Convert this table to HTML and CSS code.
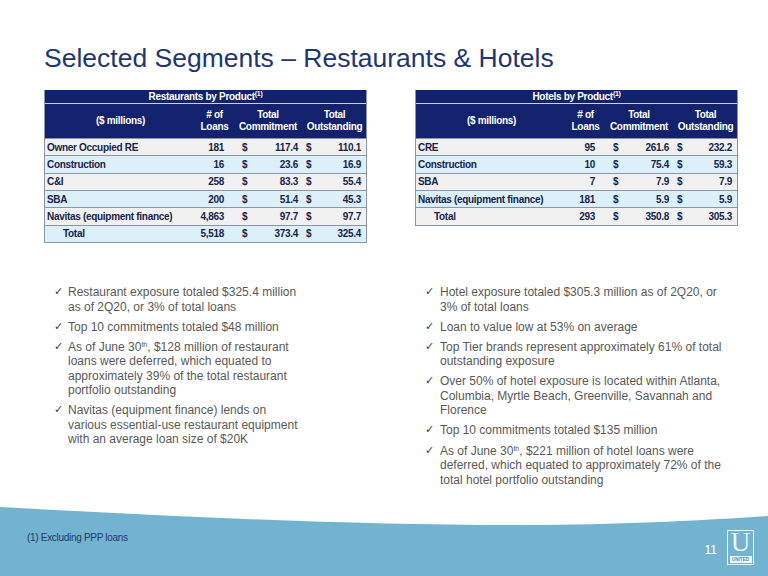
FILE: index.html
```html
<!DOCTYPE html>
<html>
<head>
<meta charset="utf-8">
<link rel="stylesheet" href="styles.css">
</head>
<body>
<div class="slide">
  <h1 class="title">Selected Segments – Restaurants &amp; Hotels</h1>

  <div class="tables">
    <div class="tbl">
      <div class="tbl-title">Restaurants by Product<sup>(1)</sup></div>
      <div class="row head">
        <div class="c lbl">($ millions)</div>
        <div class="c">#&nbsp;of<br>Loans</div>
        <div class="c">Total<br>Commitment</div>
        <div class="c">Total<br>Outstanding</div>
      </div>
      <div class="row grey"><div class="c lbl">Owner Occupied RE</div><div class="c n">181</div><div class="c m"><span>$</span><span>117.4</span></div><div class="c m o"><span>$</span><span>110.1</span></div></div>
      <div class="row blue"><div class="c lbl">Construction</div><div class="c n">16</div><div class="c m"><span>$</span><span>23.6</span></div><div class="c m o"><span>$</span><span>16.9</span></div></div>
      <div class="row grey"><div class="c lbl">C&amp;I</div><div class="c n">258</div><div class="c m"><span>$</span><span>83.3</span></div><div class="c m o"><span>$</span><span>55.4</span></div></div>
      <div class="row blue"><div class="c lbl">SBA</div><div class="c n">200</div><div class="c m"><span>$</span><span>51.4</span></div><div class="c m o"><span>$</span><span>45.3</span></div></div>
      <div class="row grey"><div class="c lbl">Navitas (equipment finance)</div><div class="c n">4,863</div><div class="c m"><span>$</span><span>97.7</span></div><div class="c m o"><span>$</span><span>97.7</span></div></div>
      <div class="row blue"><div class="c lbl total">Total</div><div class="c n">5,518</div><div class="c m"><span>$</span><span>373.4</span></div><div class="c m o"><span>$</span><span>325.4</span></div></div>
    </div>

    <div class="tbl">
      <div class="tbl-title">Hotels by Product<sup>(1)</sup></div>
      <div class="row head">
        <div class="c lbl">($ millions)</div>
        <div class="c">#&nbsp;of<br>Loans</div>
        <div class="c">Total<br>Commitment</div>
        <div class="c">Total<br>Outstanding</div>
      </div>
      <div class="row grey"><div class="c lbl">CRE</div><div class="c n">95</div><div class="c m"><span>$</span><span>261.6</span></div><div class="c m o"><span>$</span><span>232.2</span></div></div>
      <div class="row blue"><div class="c lbl">Construction</div><div class="c n">10</div><div class="c m"><span>$</span><span>75.4</span></div><div class="c m o"><span>$</span><span>59.3</span></div></div>
      <div class="row grey"><div class="c lbl">SBA</div><div class="c n">7</div><div class="c m"><span>$</span><span>7.9</span></div><div class="c m o"><span>$</span><span>7.9</span></div></div>
      <div class="row blue"><div class="c lbl">Navitas (equipment finance)</div><div class="c n">181</div><div class="c m"><span>$</span><span>5.9</span></div><div class="c m o"><span>$</span><span>5.9</span></div></div>
      <div class="row grey"><div class="c lbl total">Total</div><div class="c n">293</div><div class="c m"><span>$</span><span>350.8</span></div><div class="c m o"><span>$</span><span>305.3</span></div></div>
    </div>
  </div>

  <div class="bullets">
    <ul class="list left">
      <li><span class="chk">✓</span><span>Restaurant exposure totaled $325.4 million<br>as of 2Q20, or 3% of total loans</span></li>
      <li><span class="chk">✓</span><span>Top 10 commitments totaled $48 million</span></li>
      <li><span class="chk">✓</span><span>As of June 30<sup>th</sup>, $128 million of restaurant<br>loans were deferred, which equated to<br>approximately 39% of the total restaurant<br>portfolio outstanding</span></li>
      <li><span class="chk">✓</span><span>Navitas (equipment finance) lends on<br>various essential-use restaurant equipment<br>with an average loan size of $20K</span></li>
    </ul>
    <ul class="list right">
      <li><span class="chk">✓</span><span>Hotel exposure totaled $305.3 million as of 2Q20, or<br>3% of total loans</span></li>
      <li><span class="chk">✓</span><span>Loan to value low at 53% on average</span></li>
      <li><span class="chk">✓</span><span>Top Tier brands represent approximately 61% of total<br>outstanding exposure</span></li>
      <li><span class="chk">✓</span><span>Over 50% of hotel exposure is located within Atlanta,<br>Columbia, Myrtle Beach, Greenville, Savannah and<br>Florence</span></li>
      <li><span class="chk">✓</span><span>Top 10 commitments totaled $135 million</span></li>
      <li><span class="chk">✓</span><span>As of June 30<sup>th</sup>, $221 million of hotel loans were<br>deferred, which equated to approximately 72% of the<br>total hotel portfolio outstanding</span></li>
    </ul>
  </div>

  <div class="footer">
    <svg class="wave" width="768" height="70" viewBox="0 0 768 70" preserveAspectRatio="none">
      <path d="M0,1 C200,12 380,20 540,19 C640,18 710,14 768,10 V70 H0 Z" fill="#72b3cf"/>
    </svg>
    <div class="fn">(1) Excluding PPP loans</div>
    <div class="brand">
      <span class="pg">11</span>
      <div class="logo">
        <div class="logo-u">U</div>
        <div class="logo-name">UNITED</div>
      </div>
    </div>
  </div>
</div>
</body>
</html>
```

FILE: styles.css
```css
html, body {
  margin: 0;
  padding: 0;
  background: #ffffff;
}

.slide {
  position: relative;
  width: 768px;
  height: 576px;
  overflow: hidden;
  display: flex;
  flex-direction: column;
  font-family: "Liberation Sans", Arial, sans-serif;
}

.title {
  margin: 0;
  padding: 42px 0 0 44px;
  font-size: 26.5px;
  line-height: 32px;
  font-weight: normal;
  color: #1f3670;
}

.tables {
  display: flex;
  align-items: flex-start;
  gap: 48px;
  margin-top: 16px;
  padding-left: 44px;
}

.tbl {
  width: 321px;
  border: 1px solid #8b95a8;
  border-top: none;
  font-size: 10px;
  font-weight: bold;
  letter-spacing: -0.3px;
  color: #16244d;
}

.tbl-title {
  height: 13px;
  line-height: 13px;
  background: #12226c;
  color: #ffffff;
  text-align: center;
  border-bottom: 1px solid #c9d0e0;
}

.tbl-title sup {
  font-size: 7px;
  line-height: 0;
  vertical-align: 4px;
}

.row {
  display: grid;
  grid-template-columns: 151px 37px 70px 63px;
  height: 16.35px;
  border-top: 1px solid #8b95a8;
  align-items: center;
}

.row.head {
  height: 34px;
  border-top: none;
  background: #12226c;
  color: #ffffff;
  line-height: 12px;
  text-align: center;
}

.row.grey { background: #f1f1f1; }
.row.blue { background: #dcf0fa; }

.c {
  white-space: nowrap;
}

.row:not(.head) .lbl {
  padding-left: 2px;
}

.row .lbl.total {
  padding-left: 18px;
}

.n {
  text-align: right;
  padding-right: 9px;
}

.m {
  display: flex;
  justify-content: space-between;
  padding: 0 5px 0 9px;
}

.m.o {
  padding: 0 5px 0 3px;
}

.bullets {
  display: flex;
  margin-top: 42px;
}

.list {
  margin: 0;
  padding: 0;
  list-style: none;
  font-size: 12px;
  line-height: 14.5px;
  color: #595959;
}

.list.left {
  margin-left: 54px;
  width: 317px;
}

.list.right {
  margin-left: 54px;
  width: 320px;
}

.list li {
  display: flex;
  margin-bottom: 5.6px;
  white-space: nowrap;
}

.list sup {
  font-size: 7px;
  line-height: 0;
  vertical-align: 4px;
}

.chk {
  width: 14px;
  flex: none;
  font-family: "DejaVu Sans", sans-serif;
  font-size: 11px;
  color: #2f3d63;
}

.list.right .chk {
  width: 15px;
}

.footer {
  position: relative;
  margin-top: auto;
  height: 70px;
  display: flex;
  align-items: flex-start;
}

.wave {
  position: absolute;
  left: 0;
  top: 0;
}

.fn {
  position: relative;
  padding: 26px 0 0 27px;
  font-size: 10px;
  line-height: 12px;
  letter-spacing: -0.3px;
  color: #1f3a6a;
}

.brand {
  position: relative;
  margin-left: auto;
  margin-right: 14px;
  margin-top: 24px;
  display: flex;
  align-items: center;
  gap: 10px;
}

.pg {
  font-size: 12px;
  color: #ffffff;
  padding-top: 4px;
}

.logo {
  width: 25px;
  height: 33px;
  border: 1.5px solid #eef6fa;
  display: flex;
  flex-direction: column;
  align-items: stretch;
  justify-content: space-between;
}

.logo-u {
  height: 23px;
  font-family: "Liberation Serif", "Times New Roman", serif;
  font-size: 27px;
  line-height: 23px;
  text-align: center;
  color: #eef6fa;
}

.logo-name {
  margin: 0 1.5px 1.5px;
  height: 7px;
  background: #eef6fa;
  color: #4d94b8;
  font-size: 4.6px;
  font-weight: bold;
  line-height: 7px;
  text-align: center;
  letter-spacing: 0;
}
```
